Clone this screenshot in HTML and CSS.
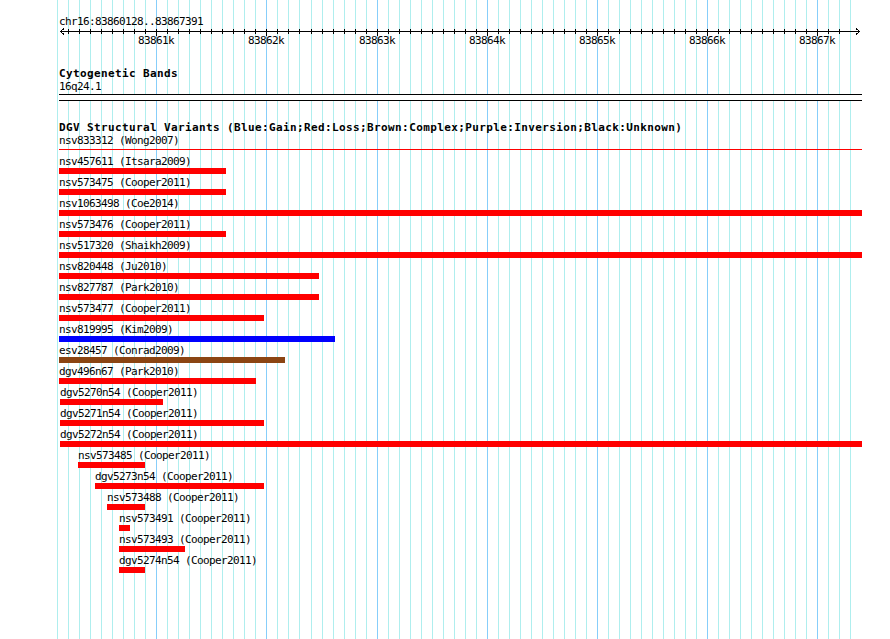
FILE: index.html
```html
<!DOCTYPE html>
<html lang="en">

<head>
    <meta charset="UTF-8">
    <meta name="viewport" content="width=device-width, initial-scale=1.0">
    <title>chr16:83860128..83867391</title>
    <link rel="stylesheet" href="styles.css">
</head>

<body>

    <div class="browser">

        <!-- ruler -->
        <div class="ruler">
            <div class="ruler-title">chr16:83860128..83867391</div>
            <svg class="ruler-axis" width="890" height="22" viewBox="0 0 890 22">
                <path class="axis-line" d="M60 3.5H860M64 0.5L60.5 3.5L64 6.5M856 0.5L859.5 3.5L856 6.5" />
                <path class="axis-tick" d="M68.5 1v5m11-5v5m11-5v5m11-5v5m11-5v5m11-5v5m11-5v5m11-5v5m11-5v5m11-5v5m11-5v5m11-5v5m11-5v5m11-5v5m11-5v5m11-5v5m11-5v5m11-5v5m11-5v5m11-5v5m11-5v5m11-5v5
                    m12-5v5m11-5v5m11-5v5m11-5v5m11-5v5m11-5v5m11-5v5m11-5v5m11-5v5m11-5v5m11-5v5m11-5v5m11-5v5m11-5v5m11-5v5m11-5v5m11-5v5m11-5v5m11-5v5m11-5v5m11-5v5m11-5v5m11-5v5m11-5v5m11-5v5
                    m11-5v5m11-5v5m11-5v5m11-5v5m11-5v5m11-5v5m11-5v5m11-5v5m11-5v5m11-5v5m11-5v5m11-5v5m11-5v5m11-5v5m11-5v5m11-5v5m11-5v5m11-5v5m11-5v5m11-5v5m11-5v5m11-5v5m11-5v5m11-5v5" />
                <path class="axis-tick" d="M156.5 1v7M266.5 1v7M377.5 1v7M487.5 1v7M597.5 1v7M707.5 1v7M817.5 1v7" />
                <text class="tick-label" x="156" y="16">83861k</text>
                <text class="tick-label" x="266" y="16">83862k</text>
                <text class="tick-label" x="377" y="16">83863k</text>
                <text class="tick-label" x="487" y="16">83864k</text>
                <text class="tick-label" x="597" y="16">83865k</text>
                <text class="tick-label" x="707" y="16">83866k</text>
                <text class="tick-label" x="817" y="16">83867k</text>
            </svg>
        </div>

        <!-- cytoband track -->
        <section class="track track-cyto">
            <h2 class="track-title">Cytogenetic Bands</h2>
            <div class="label">16q24.1</div>
            <div class="band"></div>
        </section>

        <!-- DGV track -->
        <section class="track track-dgv">
            <h2 class="track-title">DGV Structural Variants (Blue:Gain;Red:Loss;Brown:Complex;Purple:Inversion;Black:Unknown)</h2>

            <div class="feature summary" style="padding-left:59px">
                <div class="label">nsv833312 (Wong2007)</div>
                <div class="span-line" style="width:803px"></div>
            </div>

            <div class="feature" style="padding-left:59px">
                <div class="label">nsv457611 (Itsara2009)</div>
                <div class="bar loss" style="width:167px"></div>
            </div>
            <div class="feature" style="padding-left:59px">
                <div class="label">nsv573475 (Cooper2011)</div>
                <div class="bar loss" style="width:167px"></div>
            </div>
            <div class="feature" style="padding-left:59px">
                <div class="label">nsv1063498 (Coe2014)</div>
                <div class="bar loss" style="width:803px"></div>
            </div>
            <div class="feature" style="padding-left:59px">
                <div class="label">nsv573476 (Cooper2011)</div>
                <div class="bar loss" style="width:167px"></div>
            </div>
            <div class="feature" style="padding-left:59px">
                <div class="label">nsv517320 (Shaikh2009)</div>
                <div class="bar loss" style="width:803px"></div>
            </div>
            <div class="feature" style="padding-left:59px">
                <div class="label">nsv820448 (Ju2010)</div>
                <div class="bar loss" style="width:260px"></div>
            </div>
            <div class="feature" style="padding-left:59px">
                <div class="label">nsv827787 (Park2010)</div>
                <div class="bar loss" style="width:260px"></div>
            </div>
            <div class="feature" style="padding-left:59px">
                <div class="label">nsv573477 (Cooper2011)</div>
                <div class="bar loss" style="width:205px"></div>
            </div>
            <div class="feature" style="padding-left:59px">
                <div class="label">nsv819995 (Kim2009)</div>
                <div class="bar gain" style="width:276px"></div>
            </div>
            <div class="feature" style="padding-left:59px">
                <div class="label">esv28457 (Conrad2009)</div>
                <div class="bar complex" style="width:226px"></div>
            </div>
            <div class="feature" style="padding-left:59px">
                <div class="label">dgv496n67 (Park2010)</div>
                <div class="bar loss" style="width:197px"></div>
            </div>
            <div class="feature" style="padding-left:60px">
                <div class="label">dgv5270n54 (Cooper2011)</div>
                <div class="bar loss" style="width:103px"></div>
            </div>
            <div class="feature" style="padding-left:60px">
                <div class="label">dgv5271n54 (Cooper2011)</div>
                <div class="bar loss" style="width:204px"></div>
            </div>
            <div class="feature" style="padding-left:60px">
                <div class="label">dgv5272n54 (Cooper2011)</div>
                <div class="bar loss" style="width:802px"></div>
            </div>
            <div class="feature" style="padding-left:78px">
                <div class="label">nsv573485 (Cooper2011)</div>
                <div class="bar loss" style="width:67px"></div>
            </div>
            <div class="feature" style="padding-left:95px">
                <div class="label">dgv5273n54 (Cooper2011)</div>
                <div class="bar loss" style="width:169px"></div>
            </div>
            <div class="feature" style="padding-left:107px">
                <div class="label">nsv573488 (Cooper2011)</div>
                <div class="bar loss" style="width:38px"></div>
            </div>
            <div class="feature" style="padding-left:119px">
                <div class="label">nsv573491 (Cooper2011)</div>
                <div class="bar loss" style="width:11px"></div>
            </div>
            <div class="feature" style="padding-left:119px">
                <div class="label">nsv573493 (Cooper2011)</div>
                <div class="bar loss" style="width:66px"></div>
            </div>
            <div class="feature" style="padding-left:119px">
                <div class="label">dgv5274n54 (Cooper2011)</div>
                <div class="bar loss" style="width:26px"></div>
            </div>
        </section>

    </div>

</body>

</html>
```

FILE: styles.css
```css
:root {
    --mono: "DejaVu Sans Mono", "Liberation Mono", monospace;
    --grid-minor: #afeeee;
    --grid-major: #87cefa;
    --loss: #ff0000;
    --gain: #0000ff;
    --complex: #8b4513;
}

* {
    margin: 0;
    padding: 0;
    box-sizing: border-box;
}

body {
    background-color: white;
    font-family: var(--mono);
    font-size: 11px;
    color: black;
}

/* the whole panel, with the 100bp grid drawn behind the tracks */
.browser {
    width: 890px;
    height: 639px;
    overflow: hidden;
    background-color: white;
    background-image:
        repeating-linear-gradient(to right, var(--grid-major) 0 1px, transparent 1px 110px),
        repeating-linear-gradient(to right, var(--grid-major) 0 1px, transparent 1px 110px),
        repeating-linear-gradient(to right, var(--grid-minor) 0 1px, transparent 1px 11px),
        repeating-linear-gradient(to right, var(--grid-minor) 0 1px, transparent 1px 11px);
    background-position: 156px 0, 377px 0, 57px 0, 311px 0;
    background-size: 111px 100%, 441px 100%, 253px 100%, 550px 100%;
    background-repeat: no-repeat;
}

.label,
.ruler-title {
    font-family: var(--mono);
    font-size: 11px;
    line-height: 13px;
    height: 13px;
    letter-spacing: -0.62px;
    white-space: nowrap;
}

/* ruler */
.ruler {
    padding-top: 15px;
}

.ruler-title {
    padding-left: 59px;
}

.ruler-axis {
    display: block;
}

.axis-line,
.axis-tick {
    fill: none;
    stroke: black;
    stroke-width: 1;
    shape-rendering: crispEdges;
}

.tick-label {
    font-family: var(--mono);
    font-size: 11px;
    letter-spacing: -0.62px;
    text-anchor: middle;
    fill: black;
}

/* tracks */
.track-title {
    font-family: var(--mono);
    font-size: 11px;
    font-weight: bold;
    line-height: 13px;
    height: 13px;
    letter-spacing: 0.38px;
    white-space: nowrap;
    padding-left: 59px;
}

.track-cyto {
    margin-top: 17px;
}

.track-cyto .label {
    padding-left: 59px;
}

.band {
    margin: 1px 0 0 59px;
    width: 803px;
    height: 7px;
    background-color: white;
    border-top: 1px solid black;
    border-bottom: 1px solid black;
}

.track-dgv {
    margin-top: 20px;
}

.feature {
    height: 21px;
}

.span-line {
    height: 1px;
    margin-top: 2px;
    background-color: var(--loss);
}

.bar {
    height: 6px;
}

.bar.loss {
    background-color: var(--loss);
}

.bar.gain {
    background-color: var(--gain);
}

.bar.complex {
    background-color: var(--complex);
}
```
